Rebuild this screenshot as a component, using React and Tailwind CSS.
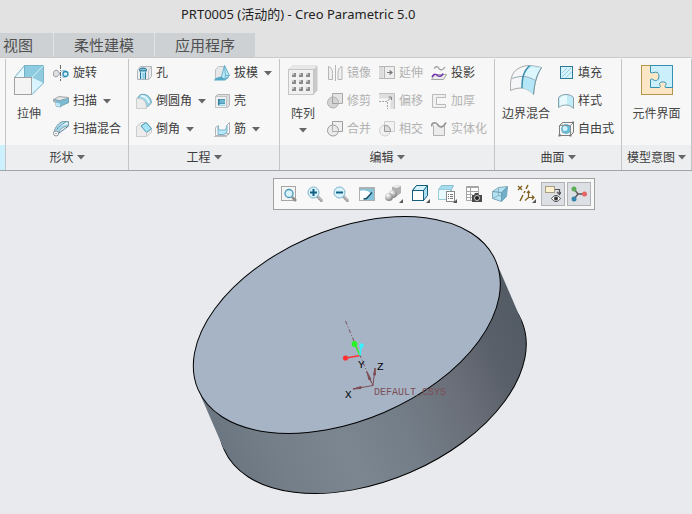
import React, { useState } from 'react';
import clsx from 'clsx';

const Icon = ({ size = 16, children }) => (
  <svg
    width={size}
    height={size}
    viewBox={`0 0 ${size} ${size}`}
    fill="none"
    strokeWidth="1"
    className="shrink-0"
    aria-hidden="true"
  >
    {children}
  </svg>
);

const Caret = () => (
  <svg width="8" height="5" viewBox="0 0 8 5" className="shrink-0" aria-hidden="true">
    <path d="M0 0h8L4 4.6z" fill="#666" />
  </svg>
);

/* ---------- shape icons ---------- */

const ExtrudeIcon = () => (
  <Icon size={32}>
    <path d="M11.5 1.5h19l-12 12h-17z" fill="#8ccbe0" />
    <path d="M30.5 1.5v17.5L19 30.5v-17z" fill="#8fcadf" />
    <path d="M19 13.5L30.5 19 19 30.5z" fill="#d9f4fd" />
    <path d="M11.5 1.5l-10 12H12z" fill="#e4f8ff" />
    <path d="M1.5 13.5l10-12h19v17.5L19 30.5" stroke="#7db3c7" />
    <path d="M19 13.5l11.5-12" stroke="#c9ecf7" />
    <path d="M11.5 1.5v12" stroke="#6fafc7" />
    <rect x="1.5" y="13.5" width="17" height="17" fill="#f4f4f4" stroke="#a2a2a2" />
  </Icon>
);

const RevolveIcon = () => (
  <Icon>
    <path d="M1 6.5C3 4.500 5 5 6.500 8.500c-1 3-4 4-5.500 2.500C0 10 0 8 1 6.500z" fill="#dfe1e3" stroke="#8c9298" />
    <path d="M8.500 6.500c2-1.500 4-1.500 5 0M8.500 11c1.500 1.500 3 1.500 4 1" stroke="#8cb9cc" />
    <circle cx="12.5" cy="9" r="2.5" fill="#d2f2ff" stroke="#2c8db3" strokeWidth="1.3" />
    <path d="M7.5 0v16" stroke="#666" strokeDasharray="4 1 1 1" />
  </Icon>
);

const SweepIcon = () => (
  <Icon>
    <path d="M0.5 6.5L6 3.5l9.500 1v5l-5 2v-3z" fill="#e2e4e5" stroke="#a4a8ab" />
    <path d="M0.5 6.5L7 8l3-1.500 5.5-1v4L10 12l-3 2-4-1V9.500l-2.500-1z" fill="#7dbcd5" stroke="#7ba4b5" />
    <path d="M3 9.500l4 1V14l-4-1z" fill="#bde7f7" />
    <path d="M0.5 6.500v2.500L3 10V8z" fill="#b4b8bb" />
  </Icon>
);

const SweptBlendIcon = () => (
  <Icon>
    <path d="M1 11.5C2 6 6 1.5 9.5 0.500h6v4.500C10 5.500 7 8 5.500 12.500z" fill="#a6d9ec" stroke="#7f9dab" />
    <path d="M7 4.500c2-1.500 4.500-2 7.500-2" stroke="#fff" strokeWidth="1.5" />
    <path d="M4 8.500c1.500-3 4-5 8.500-7" stroke="#5996b0" />
    <circle cx="3" cy="12.5" r="2.5" fill="#fff" stroke="#8b9094" />
    <path d="M5.500 12.500L15.500 5" stroke="#4f7f94" />
    <circle cx="3" cy="12.5" r=".6" fill="#555" />
  </Icon>
);

/* ---------- engineering icons ---------- */

const HoleIcon = () => (
  <Icon>
    <path d="M1.5 5.500l3-4h11v10l-3 3h-11z" fill="#ebeced" stroke="#b3b6b8" />
    <path d="M12.5 5.500v9M12.500 5.500l3-4" stroke="#c1c3c5" />
    <path d="M4.5 14V7.500l-1-3C5 3 9 3 10.500 4.500l-1 3V14" fill="#bceafa" stroke="#2d7896" />
    <path d="M6.500 14V8h2v6" fill="#8bcbe0" />
    <ellipse cx="7" cy="4.500" rx="3.5" ry="1.5" fill="#7fbcd2" stroke="#2d7896" />
  </Icon>
);

const RoundIcon = () => (
  <Icon>
    <path d="M4.500 1.500C11 0.500 15 4 15.500 10l-5 4.500C10.500 8.500 7 5.500 1 5.500z" fill="#9bd5ea" stroke="#6fa3b8" />
    <path d="M5 3c5 0 7 3 8 7" stroke="#e4f9ff" strokeWidth="1.8" />
    <path d="M0.500 15.500v-10h2c5 0 8 3 8 10z" fill="#ececec" stroke="#cbcdce" />
  </Icon>
);

const ChamferIcon = () => (
  <Icon>
    <path d="M0.500 5.500l5-4h5l5 6v4l-5 4h-10z" fill="#ececec" stroke="#c9cbcc" />
    <path d="M5 5l5-3.500 5.500 6-5 4z" fill="#a5e3f6" stroke="#4b96b1" />
    <path d="M10.500 11.500v4" stroke="#c9cbcc" />
  </Icon>
);

const DraftIcon = () => (
  <Icon>
    <path d="M1.500 4.500l3-3h6v11l-9 2z" fill="#e6e7e8" stroke="#bfc1c3" />
    <path d="M0 15.500c1-3 5-4 9-4l6 1-4 3z" fill="#57aac6" />
    <path d="M10.500 0.500l5 10-5 4-3-3z" fill="#b9eafa" stroke="#6db0c8" />
    <path d="M10.500 0.500l1 10h4M11.500 10.500l-1 4" stroke="#6db0c8" />
  </Icon>
);

const ShellIcon = () => (
  <Icon>
    <path d="M1.500 3.500l2-2h12v11l-2 2h-12z" fill="#dcdedf" stroke="#b3b6b8" />
    <rect x="1.5" y="3.5" width="11" height="11" fill="#f0f0f0" stroke="#c1c3c5" />
    <path d="M4 6h7v6.500H4z" fill="#2f7e9d" />
    <path d="M5.500 6.500H11v4H5.500z" fill="#6db6d0" />
    <path d="M4.500 12.500L6 11h5v1.500z" fill="#bfeafa" />
  </Icon>
);

const RibIcon = () => (
  <Icon>
    <path d="M1.500 6.500l3-2v8h11v-11l-3 3" stroke="#b1b4b6" />
    <path d="M1.500 6.500v8h11l3-3v-10" stroke="#b1b4b6" />
    <path d="M4 5l1 4h6.500L13 4.500V11l-3 2.500H4z" fill="#b4e8fa" stroke="#7bb4c9" />
    <path d="M0.500 15.500h12l3-3" stroke="#888" strokeDasharray="1 1" />
  </Icon>
);

/* ---------- editing icons ---------- */

const PatternIcon = () => (
  <Icon size={32}>
    <path d="M1.5 5.5l4-4h25v25l-4 4z" fill="#c9c9c9" />
    <path d="M1.5 5.5l4-4h25l-4 4z" fill="#e8e8e8" />
    <rect x="1.5" y="5.5" width="25" height="25" fill="#f0f0f0" stroke="#c5c5c5" />
    {[9, 16, 23].map((y) =>
      [5, 12, 19].map((x) => (
        <g key={`${x}-${y}`}>
          <rect x={x} y={y} width="4" height="4" fill="#8b8b8b" />
          <rect x={x} y={y} width="2" height="2" fill="#c6c6c6" />
        </g>
      ))
    )}
  </Icon>
);

const MirrorIcon = () => (
  <Icon>
    <path d="M1.500 1.500c3 1 4 3 4 7v6h-4z" fill="#f0f0f0" stroke="#b5b5b5" />
    <path d="M15 1.500c-3 1-4 3-4 7v6h4z" fill="#f0f0f0" stroke="#b5b5b5" />
    <path d="M8.5 0v16" stroke="#b5b5b5" />
  </Icon>
);

const TrimIcon = () => (
  <Icon>
    <path d="M5.500 0.500h10v10h-10z" fill="#e4e4e4" stroke="#a8a8a8" />
    <circle cx="6" cy="9.500" r="5.500" fill="#d4d4d4" stroke="#b0b0b0" />
    <path d="M5.500 4.500v6h6" stroke="#a0a0a0" />
  </Icon>
);

const MergeIcon = () => (
  <Icon>
    <path d="M5.500 0.500h10v10h-10z" fill="#f0f0f0" stroke="#9e9e9e" />
    <circle cx="6" cy="9.500" r="5.500" fill="#e9e9e9" stroke="#9e9e9e" />
    <path d="M5.500 4.500v6h6" stroke="#b0b0b0" />
  </Icon>
);

const ExtendIcon = () => (
  <Icon>
    <path d="M0 1.500h15.500v12H0" fill="#eee" />
    <path d="M0 1.500h4.500v12H0z" fill="#dcdcdc" />
    <path d="M0 1.500h15.500v12H0M5.500 1.500v12" stroke="#b5b5b5" />
    <path d="M8 7.500h5M10.500 5.500l2.500 2-2.500 2" stroke="#777" strokeWidth="1.2" />
  </Icon>
);

const OffsetIcon = () => (
  <Icon>
    <path d="M0 0.500h15.500V16h-4V5.500H0z" fill="#dedede" />
    <path d="M0 0.500h15.500V16" stroke="#c0c0c0" />
    <path d="M0 8.500h8.500V16" stroke="#a5a5a5" strokeDasharray="2 1" />
    <path d="M8.500 8l4-4M9.500 4h3v3" stroke="#8a8a8a" />
  </Icon>
);

const IntersectIcon = () => (
  <Icon>
    <path d="M5.500 0.500h10v10h-10z" fill="#f2f2f2" stroke="#cfcfcf" />
    <circle cx="6" cy="9.500" r="5.500" fill="#f0f0f0" stroke="#cfcfcf" />
    <path d="M5.500 4.500c4 0 6 2 6 6h-6z" fill="#ddd" stroke="#999" />
  </Icon>
);

const ProjectIcon = () => (
  <Icon>
    <path d="M3 3.500c2-3 4-2 5 0s4 2 6-1.500" stroke="#9a9a9a" strokeWidth="1.2" />
    <path d="M0.500 14.500l3-5h12l-3 5z" fill="#eaeaea" stroke="#a5a5a5" />
    <path d="M1 12c2-4 4-3 5.500-1.500S11 11.500 12 8.500" stroke="#7330b2" strokeWidth="1.5" />
  </Icon>
);

const ThickenIcon = () => (
  <Icon>
    <path d="M1.500 1.500h13v3h-9v7h9v3h-13z" fill="#f0f0f0" stroke="#bababa" />
  </Icon>
);

const SolidifyIcon = () => (
  <Icon>
    <path d="M2.500 4.500v10h11v-10" fill="#ececec" stroke="#b0b0b0" />
    <path d="M0.500 5.500c0-4 4-5 6-2s5 4 8.500-2" stroke="#939393" strokeWidth="1.6" />
  </Icon>
);

/* ---------- surface icons ---------- */

const BoundaryBlendIcon = () => (
  <Icon size={32}>
    <path d="M4.500 7.500C12 0.500 19 0.500 31.500 3.500 26 12 24.500 20 23.500 30.500 18 24 10 22 0.500 26.500 0 17 1.500 11 4.500 7.500z" fill="#f5f6f7" stroke="#a5a9ad" />
    <path d="M19 1.500l12.500 2C26 12 24.500 20 23.500 30.500 20 27 17 25 12 24c0-8 1-16 7-22.500z" fill="#b4e6f7" />
    <path d="M21 3l9.500 1C27 10 25.500 14 25 16.500 22 14 18 13 14 13c1-4 3-7 7-10z" fill="#dcf6fe" />
    <path d="M2 14.500c8-3 16-3 23 2" stroke="#93abb4" />
    <path d="M20 1.500C13 7 12 15 12 24" stroke="#3c8eab" strokeWidth="1.5" />
    <path d="M31.500 3.500C26 12 24.500 20 23.500 30.500" stroke="#7394a0" />
  </Icon>
);

const FillIcon = () => (
  <Icon>
    <rect x="2.5" y="1.5" width="12" height="12" fill="#d5f4ff" stroke="#2c7896" />
    <path d="M4 8l5-5M4 12l9-9M8 12.500L13.500 7" stroke="#93cbdf" />
  </Icon>
);

const StyleIcon = () => (
  <Icon>
    <path d="M0.500 4.500C4 0.500 12 0.500 15.500 4.500v11C12 11.500 6 10.500 0.500 14.500z" fill="#c1ebf8" stroke="#8aa0a8" />
    <path d="M2 5C5 2 8 2 9 2.500v9C6 11 4 12 2 13z" fill="#e9faff" />
  </Icon>
);

const FreestyleIcon = () => (
  <Icon>
    <circle cx="8" cy="8" r="5" fill="#5ebbda" />
    <circle cx="7" cy="7.500" r="2.500" fill="#d1f3fd" />
    <path d="M1.500 4.500l3-3h11v10l-3 3h-11z" stroke="#7d7d7d" />
    <path d="M1.500 4.500h11v10M12.500 4.500l3-3" stroke="#8d8d8d" />
    <path d="M4.500 1.500v10h11M4.500 11.500l-3 3" stroke="#a0a0a0" strokeDasharray="1 1" />
    <path d="M0.500 13.500h2v2h-2zM11.500 13.500h2v2h-2zM14 0.500h2v2h-2z" fill="#777" />
  </Icon>
);

const ComponentInterfaceIcon = () => (
  <Icon size={32}>
    <rect x="0.5" y="1.5" width="31" height="29" fill="#fbe7c5" stroke="#b6964f" />
    <path
      d="M9.500 1.500h22v22h-7c-2-1 2-3 0-5-2-1-5-1-6 1 0 2 2 3 0 4h-9v-8c1-2 4 2 6 1 3-1 3-6 1-8-3-1-4 1-7 0z"
      fill="#ccf0fb"
      stroke="#3390b0"
    />
  </Icon>
);

/* ---------- view toolbar icons ---------- */

const Lens = ({ sign }) => (
  <>
    <path d="M10 10l5.500 5.500" stroke="#999" strokeWidth="3" />
    <path d="M10.500 10l5 5" stroke="#d8d8d8" />
    <circle cx="6.500" cy="6.500" r="5.500" fill="#d9f3fd" stroke="#79b1c6" />
    <path d={sign} stroke="#116187" strokeWidth="2" />
  </>
);

const RefitIcon = () => (
  <Icon>
    <rect x="0.5" y="0.5" width="14" height="14" fill="#f5f5f5" stroke="#a5a5a5" />
    <path d="M11 11l4 4" stroke="#8f8f8f" strokeWidth="2.5" />
    <circle cx="8" cy="7.500" r="4" fill="#d9f3fd" stroke="#4597b5" strokeWidth="1.3" />
  </Icon>
);

const ZoomInIcon = () => (
  <Icon>
    <Lens sign="M3 6.500h7M6.500 3v7" />
  </Icon>
);

const ZoomOutIcon = () => (
  <Icon>
    <Lens sign="M3 6.500h7" />
  </Icon>
);

const RepaintIcon = () => (
  <Icon>
    <rect x="0.5" y="1.5" width="15" height="13" fill="#86c4d9" stroke="#adb0b2" />
    <path d="M1 5c4-1 10 0 10 2.500 0 2.500-5 4-6 6.500H1z" fill="#fff" />
    <path d="M0 2h16" stroke="#adb0b2" strokeWidth="2" />
    <path d="M4.500 13l3-.5L13 6.500" stroke="#17506a" strokeWidth="1.5" />
  </Icon>
);

const Corner = () => <path d="M19 15v4h-4z" fill="#555" />;

const ShadingIcon = () => (
  <Icon size={20}>
    <defs>
      <radialGradient id="ball" cx=".35" cy=".3" r=".7">
        <stop offset="0" stopColor="#fff" />
        <stop offset="1" stopColor="#858585" />
      </radialGradient>
    </defs>
    <path d="M8 3l5-2 4 1v7l-4 3-5-2z" fill="#b0b0b0" />
    <path d="M8 3l5-2 4 1-4 2z" fill="#eee" />
    <circle cx="9" cy="10" r="4" fill="url(#ball)" />
    <circle cx="5" cy="13" r="4" fill="url(#ball)" />
    <Corner />
  </Icon>
);

const DisplayStyleIcon = () => (
  <Icon size={20}>
    <path d="M1.500 6.500l4-5h11v10l-4 5h-11z" fill="#a8def0" stroke="#165f7c" />
    <path d="M1.500 6.500l4-5h11l-4 5z" fill="#d4f2fb" stroke="#165f7c" />
    <rect x="1.5" y="6.500" width="11" height="10" fill="#fff" stroke="#165f7c" />
    <Corner />
  </Icon>
);

const SavedViewsIcon = () => (
  <Icon size={20}>
    <path d="M0.500 5.500l3-4h12l-2 4v9h-13z" fill="#a5dcee" stroke="#8abed0" />
    <rect x="0.5" y="5.500" width="12" height="10" fill="#e9faff" stroke="#9bcadb" />
    <rect x="8.500" y="7.500" width="8" height="10" fill="#fff" stroke="#8a8a8a" />
    <path d="M10 10.500h1M12 10.500h3M10 12.500h1M12 12.500h3M10 14.500h1M12 14.500h3" stroke="#777" />
    <Corner />
  </Icon>
);

const ViewManagerIcon = () => (
  <Icon>
    <path d="M0.500 0.500h12v14H0.500z" fill="#fff" stroke="#a5a5a5" />
    <path d="M0 1.500h13M0.500 5.500h12M0.500 8.500h6M0.500 11.500h6M4.500 2v12" stroke="#a5a5a5" />
    <path d="M6 9h2l1-2h3l1 2h3v7H6z" fill="#4a4a4a" />
    <circle cx="11" cy="12" r="2.500" fill="#222" stroke="#ccc" />
  </Icon>
);

const PerspectiveIcon = () => (
  <Icon>
    <path d="M0.500 5.500l6-4 9-1-1 10-5 5-9-3z" fill="#b3e2f2" stroke="#83a9b7" />
    <path d="M6.500 1.500v8l-6 3M6.500 9.500l8 1" stroke="#86b4c6" />
    <path d="M9.500 6.500l6-6-1 10-5 5z" fill="#6fafc9" />
    <path d="M0.500 5.500l9 1v9M9.500 6.500l6-6" stroke="#6e9db0" />
  </Icon>
);

const DatumDisplayIcon = () => (
  <Icon size={20}>
    <path d="M1 2l4 4M5 2L1 6" stroke="#80601f" strokeWidth="1.3" />
    <path d="M11 1L9 5M8 7l-1 2M6 11l-3 6" stroke="#80601f" strokeWidth="1.5" />
    <path d="M11.500 7v6.500H17M11.500 13.500L8 16.500M10 9l1.500-2L13 9M15 11.500l2 2-2 2" stroke="#80601f" strokeWidth="1.2" />
    <Corner />
  </Icon>
);

const AnnotationIcon = () => (
  <Icon>
    <rect x="0.5" y="0.5" width="9" height="6" fill="#fdf1ce" stroke="#a89d80" />
    <path d="M10 3.500h4.500v4M12 6l2.500 2.500L16 6" stroke="#555" strokeWidth="1.2" />
    <path d="M6.500 12.500c3-4 6-4 9 0-3 4-6 4-9 0z" fill="#fff" stroke="#444" />
    <circle cx="11" cy="12.500" r="2" fill="#333" />
  </Icon>
);

const SpinCenterIcon = () => (
  <Icon>
    <path d="M3 3l4 5-4 5M7 8h6" stroke="#555" strokeWidth="1.4" />
    <circle cx="3" cy="3" r="2.500" fill="#5cab55" />
    <circle cx="3" cy="13" r="2.500" fill="#3585ac" />
    <circle cx="13.500" cy="8" r="2.500" fill="#e56464" />
  </Icon>
);

/* ---------- ribbon ---------- */

const groups = [
  {
    title: '形状',
    main: { label: '拉伸', icon: ExtrudeIcon },
    columns: [
      [
        { label: '旋转', icon: RevolveIcon },
        { label: '扫描', icon: SweepIcon, menu: true },
        { label: '扫描混合', icon: SweptBlendIcon },
      ],
    ],
  },
  {
    title: '工程',
    columns: [
      [
        { label: '孔', icon: HoleIcon },
        { label: '倒圆角', icon: RoundIcon, menu: true },
        { label: '倒角', icon: ChamferIcon, menu: true },
      ],
      [
        { label: '拔模', icon: DraftIcon, menu: true },
        { label: '壳', icon: ShellIcon },
        { label: '筋', icon: RibIcon, menu: true },
      ],
    ],
  },
  {
    title: '编辑',
    main: { label: '阵列', icon: PatternIcon, menu: true },
    columns: [
      [
        { label: '镜像', icon: MirrorIcon, disabled: true },
        { label: '修剪', icon: TrimIcon, disabled: true },
        { label: '合并', icon: MergeIcon, disabled: true },
      ],
      [
        { label: '延伸', icon: ExtendIcon, disabled: true },
        { label: '偏移', icon: OffsetIcon, disabled: true },
        { label: '相交', icon: IntersectIcon, disabled: true },
      ],
      [
        { label: '投影', icon: ProjectIcon },
        { label: '加厚', icon: ThickenIcon, disabled: true },
        { label: '实体化', icon: SolidifyIcon, disabled: true },
      ],
    ],
  },
  {
    title: '曲面',
    main: { label: '边界混合', icon: BoundaryBlendIcon },
    columns: [
      [
        { label: '填充', icon: FillIcon },
        { label: '样式', icon: StyleIcon },
        { label: '自由式', icon: FreestyleIcon },
      ],
    ],
  },
  {
    title: '模型意图',
    last: true,
    main: { label: '元件界面', icon: ComponentInterfaceIcon },
    columns: [],
  },
];

const MainButton = ({ item }) => {
  const Glyph = item.icon;
  return (
    <button className="flex flex-col items-center self-start pt-[5px] text-[#444]">
      <Glyph />
      <span className="mt-[10px] leading-4 whitespace-nowrap">{item.label}</span>
      {item.menu && (
        <span className="mt-[6px]">
          <Caret />
        </span>
      )}
    </button>
  );
};

const SmallButton = ({ item }) => {
  const Glyph = item.icon;
  return (
    <button
      disabled={item.disabled}
      className="flex h-7 items-center whitespace-nowrap text-[#3c3c3c] disabled:text-[#b2b2b2]"
    >
      <Glyph />
      <span className="ml-1">{item.label}</span>
      {item.menu && (
        <span className="ml-[6px]">
          <Caret />
        </span>
      )}
    </button>
  );
};

const RibbonGroup = ({ group }) => (
  <section
    className={clsx(
      'flex shrink-0 flex-col border-l border-[#c3c5c7]',
      group.last && 'grow border-r'
    )}
  >
    <div
      className={clsx(
        'flex h-[86px] gap-2',
        group.last ? 'justify-center px-[10px]' : 'px-[7px]'
      )}
    >
      {group.main && <MainButton item={group.main} />}
      {group.columns.map((column, i) => (
        <div key={i} className="flex flex-col items-start">
          {column.map((item) => (
            <SmallButton key={item.label} item={item} />
          ))}
        </div>
      ))}
    </div>
    <button className="flex h-[25px] items-center justify-center gap-[3px] bg-[#edeef0] text-[#3c3c3c]">
      {group.title}
      <Caret />
    </button>
  </section>
);

const viewTools = [
  { name: '重新调整', icon: RefitIcon },
  { name: '放大', icon: ZoomInIcon },
  { name: '缩小', icon: ZoomOutIcon },
  { name: '重画', icon: RepaintIcon },
  { name: '渲染选项', icon: ShadingIcon, menu: true },
  { name: '显示样式', icon: DisplayStyleIcon, menu: true },
  { name: '已保存方向', icon: SavedViewsIcon, menu: true },
  { name: '视图管理器', icon: ViewManagerIcon },
  { name: '透视图', icon: PerspectiveIcon },
  { name: '基准显示过滤器', icon: DatumDisplayIcon, menu: true },
  { name: '注释显示', icon: AnnotationIcon, toggle: true },
  { name: '旋转中心', icon: SpinCenterIcon, toggle: true },
];

const ViewToolbar = () => {
  const [active, setActive] = useState({ 注释显示: true, 旋转中心: true });

  const handleToggle = (tool) => {
    if (!tool.toggle) return;
    setActive((prev) => ({ ...prev, [tool.name]: !prev[tool.name] }));
  };

  return (
    <div className="absolute top-[7px] left-[273px] flex gap-[2px] border border-[#a2a2a2] bg-[#f8f8f8] p-[3px]">
      {viewTools.map((tool) => {
        const Glyph = tool.icon;
        return (
          <button
            key={tool.name}
            aria-label={tool.name}
            onClick={() => handleToggle(tool)}
            className={clsx(
              'flex h-6 items-center justify-center border',
              tool.menu ? 'w-[25px]' : 'w-6',
              active[tool.name] ? 'border-[#b1b3b5] bg-[#dcdfe3]' : 'border-transparent'
            )}
          >
            <Glyph />
          </button>
        );
      })}
    </div>
  );
};

const ModelView = () => (
  <svg
    viewBox="0 171 692 343"
    preserveAspectRatio="xMidYMin meet"
    className="block w-full"
    role="img"
    aria-label="PRT0005"
  >
    <defs>
      <linearGradient id="side" gradientUnits="userSpaceOnUse" x1="-162" y1="0" x2="162" y2="0">
        <stop offset="0" stopColor="#6b7681" />
        <stop offset=".15" stopColor="#757f8a" />
        <stop offset=".35" stopColor="#7c8691" />
        <stop offset=".55" stopColor="#737d87" />
        <stop offset=".75" stopColor="#696d77" />
        <stop offset=".88" stopColor="#5a6069" />
        <stop offset="1" stopColor="#535b65" />
      </linearGradient>
    </defs>
    <g transform="translate(346.8 325) rotate(-23.4)">
      <ellipse cy="65.4" rx="162.1" ry="95.1" fill="url(#side)" stroke="#000" />
      <rect x="-162.1" width="324.2" height="65.4" fill="url(#side)" />
      <ellipse rx="162.1" ry="95.1" fill="#a7b4c6" stroke="#000" />
    </g>
    <g fill="none" stroke="#7d4f55">
      <path d="M345.5 321l27 64" strokeDasharray="4 2 1 2" />
      <path d="M373 385.5l-20 3.5M373 385.5l2-17M373 385.5l-6-13" />
      <path d="M353 389l8-2.5v2zM375 368l-1.500 7h2zM367 372l2 8 2-1z" fill="#7d4f55" />
    </g>
    <path d="M360 355.5l-14 2.5" stroke="#ff3030" strokeWidth="1.3" />
    <path d="M360 355.5l-5-11" stroke="#30f030" strokeWidth="1.5" />
    <path d="M360 355.5l1-10" stroke="#30f0ff" strokeWidth="1.5" />
    <circle cx="345.5" cy="358" r="2.6" fill="#ff3030" />
    <circle cx="354.5" cy="344" r="2.9" fill="#28f528" />
    <circle cx="361.5" cy="345.5" r="2.2" fill="#35f3ff" />
    <g fontFamily="'Liberation Mono', monospace" fontSize="11">
      <text x="358" y="368" fill="#000">Y</text>
      <text x="377" y="370" fill="#000">Z</text>
      <text x="345" y="398" fill="#000">X</text>
      <text x="374" y="395" fontSize="10" fill="#7d4f55">DEFAULT_CSYS</text>
    </g>
  </svg>
);

const tabs = ['视图', '柔性建模', '应用程序'];

const App = () => (
  <div className="flex min-h-screen flex-col overflow-hidden bg-[#e9eaee] font-['Noto_Sans','Noto_Sans_CJK_SC',sans-serif] text-[12px]">
    <header className="bg-[#e2e2e2]">
      <h1 className="h-[33px] pt-1 pl-[181px] text-[13px] leading-5 whitespace-nowrap text-[#222]">
        PRT0005 (活动的) - Creo Parametric 5.0
      </h1>
      <nav className="flex gap-px border-b border-[#c8c9ca] text-[15px] text-[#505050]">
        {tabs.map((tab, i) => (
          <button
            key={tab}
            className={clsx(
              'h-6 bg-[#cdd1d4] pr-5 leading-6 whitespace-nowrap',
              i === 0 ? 'pl-[3px]' : 'pl-5'
            )}
          >
            {tab}
          </button>
        ))}
      </nav>
    </header>

    <div className="flex border-b border-[#a3a4a6] bg-[#f7f7f7] pt-px">
      <div className="flex w-[5px] shrink-0 flex-col">
        <div className="h-[86px]" />
        <div className="h-[25px] bg-[#cdf0ff]" />
      </div>
      {groups.map((group) => (
        <RibbonGroup key={group.title} group={group} />
      ))}
    </div>

    <main className="relative grow">
      <ModelView />
      <ViewToolbar />
    </main>
  </div>
);

export default App;
